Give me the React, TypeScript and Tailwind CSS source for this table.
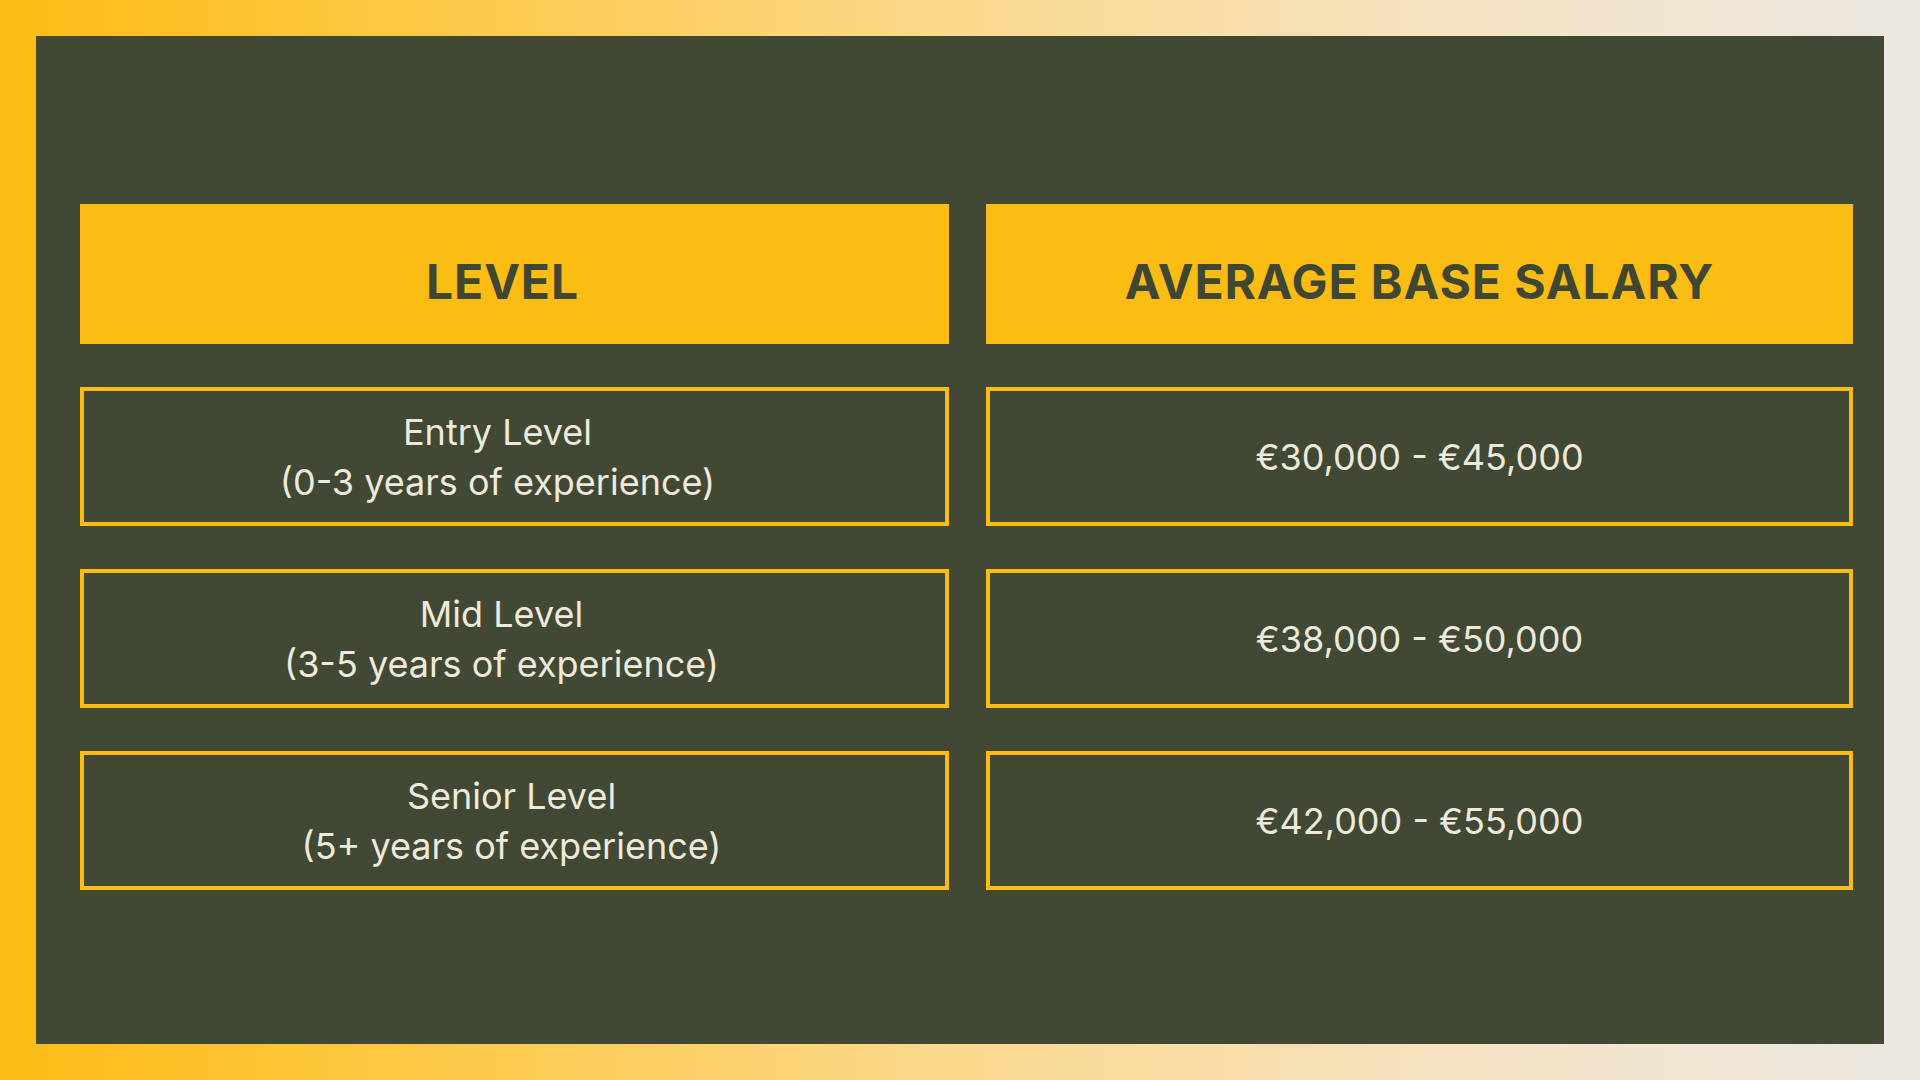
const rows = [
  { level: 'Entry Level', years: '(0-3 years of experience)', salary: '€30,000 - €45,000', shift: 'pr-[34px]' },
  { level: 'Mid Level', years: '(3-5 years of experience)', salary: '€38,000 - €50,000', shift: 'pr-[26px]' },
  { level: 'Senior Level', years: '(5+ years of experience)', salary: '€42,000 - €55,000', shift: 'pr-[6px]' },
];

const App = () => {
  return (
    <div
      className="w-full h-[1080px] p-[36px] bg-[linear-gradient(90deg,#fdbc14_0%,#fdca4c_25%,#fad98d_50%,#f5e2c1_75%,#ebe8e2_100%)]"
      style={{ fontFamily: 'Inter, "Noto Sans", sans-serif' }}
    >
      <div className="h-full bg-[#414833] pt-[168px] pl-[44px]" data-section="salary-table">
        <div className="grid grid-cols-[869px_867px] gap-x-[37px] gap-y-[43px]">
          <div className="h-[140px] bg-[#fbbd13] flex items-center justify-center pt-[15px] pr-[24px]">
            <h2 className="text-[48px] font-bold text-[#3f4733] leading-none tracking-[0.9px]">LEVEL</h2>
          </div>
          <div className="h-[140px] bg-[#fbbd13] flex items-center justify-center pt-[15px]">
            <h2 className="text-[48px] font-bold text-[#3f4733] leading-none tracking-[0.9px]">AVERAGE BASE SALARY</h2>
          </div>

          {rows.map((row, i) => (
            <div key={i} className="contents" data-row={`row-${i}`}>
              <div className={`h-[139px] border-4 border-[#fbbd13] flex flex-col items-center justify-center text-[36px] leading-[50px] text-[#eee9dd] ${row.shift}`}>
                <p>{row.level}</p>
                <p>{row.years}</p>
              </div>
              <div className="h-[139px] border-4 border-[#fbbd13] flex items-center justify-center text-[36px] leading-[50px] text-[#eee9dd]">
                <p>{row.salary}</p>
              </div>
            </div>
          ))}
        </div>
      </div>
    </div>
  );
};

export default App;
